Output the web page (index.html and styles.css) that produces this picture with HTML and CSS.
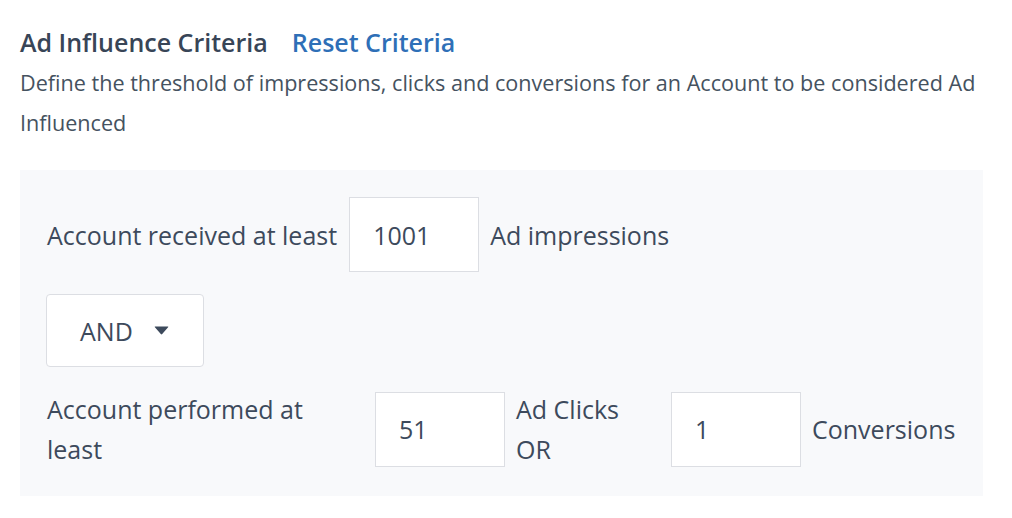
FILE: index.html
```html
<!DOCTYPE html>
<html>
<head>
<meta charset="utf-8">
<link rel="stylesheet" href="styles.css">
</head>
<body>
<div class="page">
  <div class="header">
    <h2 class="title">Ad Influence Criteria</h2>
    <a class="reset" href="#">Reset Criteria</a>
  </div>
  <p class="desc">Define the threshold of impressions, clicks and conversions for an Account to be considered Ad Influenced</p>
  <div class="panel">
    <div class="row">
      <span class="label first-label">Account received at least</span>
      <div class="input">1001</div>
      <span class="label">Ad impressions</span>
    </div>
    <div class="row">
      <div class="select">
        <span>AND</span>
        <svg class="caret" width="15" height="9" viewBox="0 0 15 9"><path d="M1.2 0.5 H13.8 Q14.8 0.5 14.1 1.3 L8.2 8.1 Q7.5 8.8 6.8 8.1 L0.9 1.3 Q0.2 0.5 1.2 0.5 Z" fill="#3d4a5c"/></svg>
      </div>
    </div>
    <div class="row">
      <span class="label wrap-label">Account performed at least</span>
      <div class="input">51</div>
      <span class="label or-label">Ad Clicks<br>OR</span>
      <div class="input">1</div>
      <span class="label">Conversions</span>
    </div>
  </div>
</div>
</body>
</html>
```
FILE: styles.css
```css
html, body {
  margin: 0;
  padding: 0;
  background: #ffffff;
}
body {
  font-family: "Open Sans", "Noto Sans", sans-serif;
  color: #3d4a5c;
}
.page {
  padding: 26px 29px 0 20px;
}
.header {
  display: flex;
  align-items: baseline;
  gap: 24px;
}
.title {
  margin: 0;
  font-size: 25px;
  font-weight: 600;
  line-height: 32px;
  color: #384557;
}
.reset {
  font-size: 25px;
  font-weight: 600;
  color: #2e6fb7;
  text-decoration: none;
  line-height: 32px;
}
.desc {
  margin: 5px 0 0 0;
  font-size: 21.6px;
  line-height: 40px;
  color: #45525f;
}
.panel {
  margin-top: 27px;
  background: #f8f9fb;
  padding: 27px 27px 27px 27px;
  display: flex;
  flex-direction: column;
  gap: 22px;
}
.row {
  display: flex;
  align-items: center;
  gap: 11px;
}
.label {
  font-size: 25px;
  line-height: 40px;
  color: #3d4a5c;
}
.first-label {
  margin-right: 1px;
}
.input {
  box-sizing: border-box;
  width: 130px;
  height: 75px;
  background: #fff;
  border: 1px solid #dcdee3;
  padding-left: 23px;
  display: flex;
  align-items: center;
  font-size: 25px;
  color: #3d4a5c;
}
.select {
  box-sizing: border-box;
  width: 158px;
  height: 73px;
  margin-left: -1px;
  background: #fff;
  border: 1px solid #dcdee3;
  border-radius: 4px;
  display: flex;
  align-items: center;
  padding-left: 33px;
  font-size: 25px;
  color: #3d4a5c;
}
.caret {
  margin-left: 21px;
}
.wrap-label {
  width: 290px;
  margin-right: 27px;
}
.or-label {
  width: 144px;
}
```
